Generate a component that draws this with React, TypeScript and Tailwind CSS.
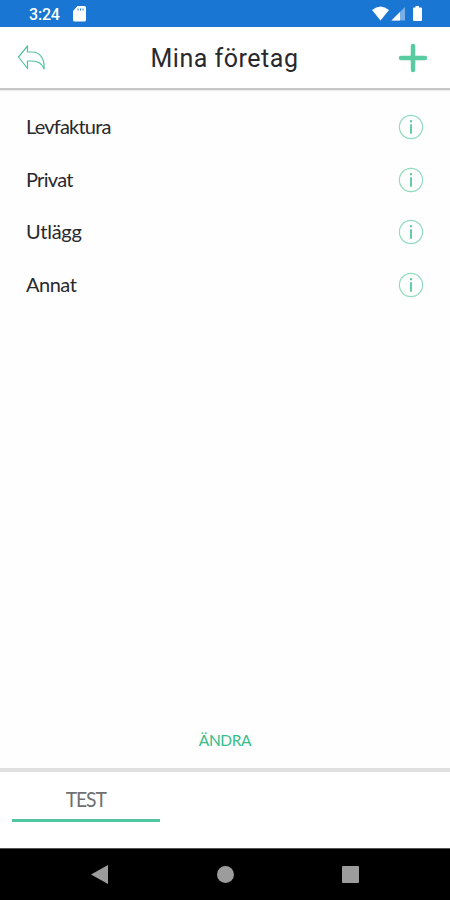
import React from 'react';

const companies = [
  { name: 'Levfaktura', spacing: 'tracking-[-0.8px]' },
  { name: 'Privat', spacing: 'tracking-[-0.7px]' },
  { name: 'Utlägg', spacing: 'tracking-[-0.25px]' },
  { name: 'Annat', spacing: 'tracking-[-0.5px]' },
];

function StatusBar() {
  return (
    <header className="flex h-[27px] shrink-0 items-center bg-[#1976d2] pl-[29px] pr-[27px] text-white">
      <span className="w-[44px] pt-[2px] font-['Roboto',sans-serif] text-[16px] font-medium leading-none tracking-[-0.2px]">3:24</span>
      <svg width="13" height="16" viewBox="0 0 13 16" fill="currentColor">
        <path d="M4.5 0H11.5Q13 0 13 1.5V14Q13 15.5 11.5 15.5H1.5Q0 15.5 0 14V5Z" />
        <path d="M5 2.5V4.5M7.5 2.5V4.5M10 2.5V4.5" stroke="#1976d2" strokeWidth="1" />
      </svg>
      <div className="ml-auto flex items-center pt-px">
        <svg width="51" height="16" viewBox="0 0 51 16" fill="currentColor">
          <path d="M0 4Q8.500 -3 17 4L8.500 14.500Z" />
          <path d="M33 1V14.500H19.500Z" opacity=".42" />
          <path d="M28 6V14.500H19.500Z" />
          <path d="M43.500 0H47V1.500H49Q50 1.500 50 2.500V14Q50 15 49 15H42Q41 15 41 14V2.500Q41 1.500 42 1.500H43.500Z" />
        </svg>
      </div>
    </header>
  );
}

function InfoIcon() {
  return (
    <svg width="26" height="26" viewBox="0 0 26 26" fill="none">
      <circle cx="13" cy="13" r="11.600" stroke="#92dcbf" strokeWidth="1.200" />
      <path d="M13 10.300V19.700" stroke="#55c89c" strokeWidth="1.800" />
      <path d="M13 6.300V8.300" stroke="#55c89c" strokeWidth="2" />
    </svg>
  );
}

export default function App() {
  return (
    <div className="flex h-[900px] w-[450px] flex-col overflow-hidden bg-[#fefefe] font-['Lato',sans-serif] text-[#29292d]">
      <StatusBar />
      <div className="flex h-[63px] shrink-0 items-center justify-between border-b-2 border-[#c6c6c6] bg-white pl-[17px] pr-[22px] shadow-[0_1px_1px_#eeeeee]">
        <button aria-label="Tillbaka">
          <svg width="29" height="26" viewBox="0 0 29 26" fill="none" stroke="#50c49b" strokeWidth="1.200" strokeLinejoin="round">
            <path d="M1.500 12L10.500 1V7H15C23 7 28 14 27 24C25 18 21 16 15 16H10.500V23.500Z" />
          </svg>
        </button>
        <h1 className="pl-[5px] pt-[3px] font-['Roboto',sans-serif] text-[25px] font-normal leading-8 tracking-[0.52px]">Mina företag</h1>
        <button aria-label="Lägg till">
          <svg width="30" height="30" viewBox="0 0 30 30" fill="none" stroke="#58cba0" strokeWidth="4.500" strokeLinecap="round">
            <path d="M15 3V27M3 15H27" />
          </svg>
        </button>
      </div>
      <main className="flex flex-1 flex-col">
        <ul className="pt-[11px]">
          {companies.map((company) => (
            <li key={company.name} className="flex h-[52.5px] items-center justify-between pl-[26px] pr-[26px]">
              <span className={`pb-[2px] text-[20px] leading-6 ${company.spacing}`}>{company.name}</span>
              <InfoIcon />
            </li>
          ))}
        </ul>
        <button className="mt-auto mb-[18px] self-center font-['Lato',sans-serif] text-[15.5px] leading-5 tracking-[-0.4px] text-[#36bd8b]">ÄNDRA</button>
      </main>
      <nav className="h-[80px] shrink-0 border-t-[4px] border-[#e0e0e0] bg-white pl-[12px]">
        <button className="flex h-[50px] w-[148px] items-center justify-center border-b-[3px] border-[#51c6a0] pt-[7px] text-[21px] leading-6 text-[#707070]">
          <span className="scale-x-[0.92] tracking-[-1.200px]">TEST</span>
        </button>
      </nav>
      <footer className="flex h-[52px] shrink-0 items-center justify-between border-t border-[#555555] bg-black pl-[91px] pr-[91px]">
        <svg width="17" height="19" viewBox="0 0 17 19" fill="#9c9c9c"><path d="M0 9.500L17 0V19Z" /></svg>
        <div className="size-[17px] rounded-full bg-[#9c9c9c]" />
        <div className="size-[17px] rounded-[1px] bg-[#9c9c9c]" />
      </footer>
    </div>
  );
}
